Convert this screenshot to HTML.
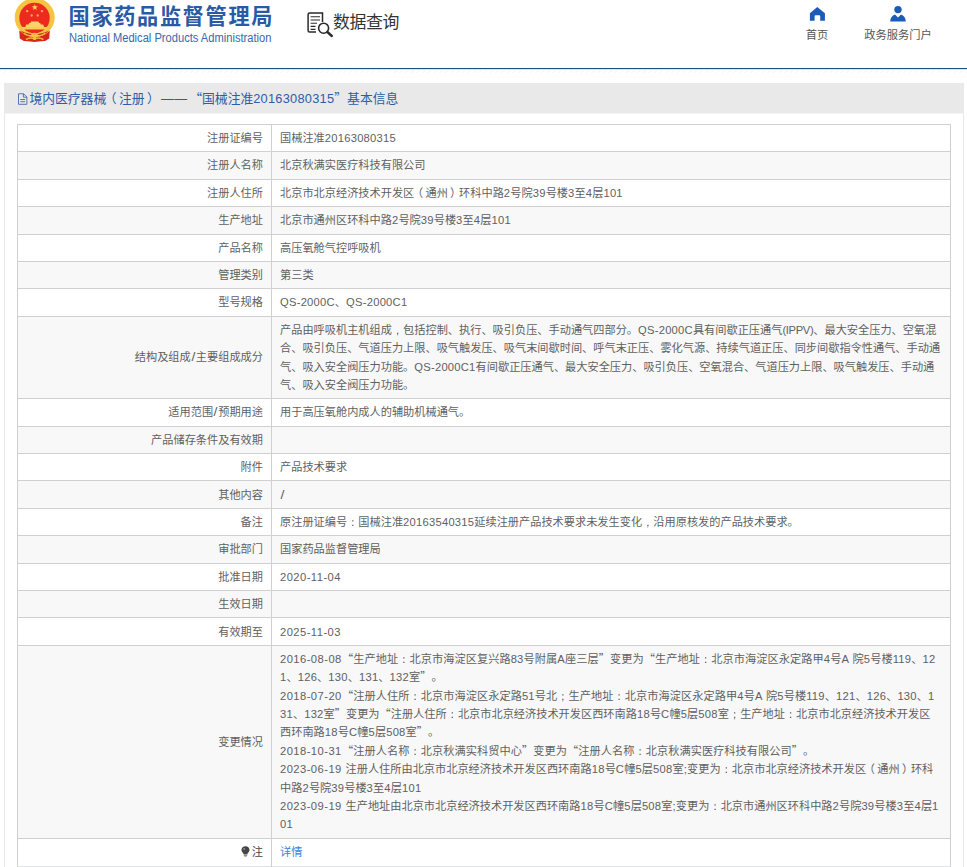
<!DOCTYPE html>
<html lang="zh-CN">
<head>
<meta charset="utf-8">
<title>国家药品监督管理局 数据查询</title>
<style>
*{box-sizing:border-box;margin:0;padding:0}
html,body{width:967px;height:867px;overflow:hidden;background:#fff}
body{position:relative;font-family:"Liberation Sans","Noto Sans CJK SC",sans-serif;font-size:11.2px;color:#5f5f5f;line-height:18.4px;text-spacing-trim:space-all}
.q{font-family:"Noto Sans CJK SC","Liberation Sans",sans-serif;line-height:0}
.c{font-family:"WenQuanYi Zen Hei","Noto Sans CJK SC",sans-serif;line-height:0}
.pl{position:relative;left:-.2em}
.pr{position:relative;left:.2em}
.e{letter-spacing:.25px}
.m{font-family:"Liberation Sans",sans-serif;letter-spacing:.4px;margin-left:3.6px;margin-right:1.9px}
.s{display:inline-block;transform:scale(1.25,1.12);margin:0 .9px}
.n{letter-spacing:-.35px}
.d{letter-spacing:.45px}
.k{margin-right:-3px}
.j{margin-right:.7px}
.abs{position:absolute}
.hd{position:absolute;left:0;top:0;width:967px;height:74px;background:#fff}
.t1{position:absolute;left:68.6px;top:1px;height:32px;line-height:32px;font-size:21.2px;font-weight:bold;color:#2a59a6;white-space:nowrap;font-family:"Liberation Sans","Noto Sans CJK SC",sans-serif;letter-spacing:1.65px}
.t2{position:absolute;left:68.6px;top:31.3px;height:14px;line-height:14px;font-size:12px;color:#3a66ad;white-space:nowrap;font-family:"Liberation Sans",sans-serif;transform:scaleX(.928);transform-origin:0 0}
.dq{position:absolute;left:333px;top:9.8px;height:25px;line-height:25px;font-size:16.9px;color:#333;white-space:nowrap;letter-spacing:-.35px}
.nv{position:absolute;top:26px;height:18px;line-height:18px;font-size:11.28px;color:#555;white-space:nowrap;text-align:center}
.hl{position:absolute;left:0;top:68px;width:967px;height:1px;background:#1c4f88}
.hl2{position:absolute;left:0;top:69px;width:967px;height:1px;background:#d3ecf7}
.pat{position:absolute;left:0;top:70px;width:967px;height:3px;background:repeating-linear-gradient(135deg,#fdf3f1 0 1.5px,#fff 1.5px 4px);opacity:.7}
.pn{position:absolute;left:4px;top:83px;width:960px;height:800px;border:1px solid #e8e8e8;border-top:0;background:#fff}
.pt{position:absolute;left:4px;top:83px;width:960px;height:31px;background:linear-gradient(#e9e9e9 0 30px,#f4f4f4 30px 31px)}
.ptt{position:absolute;left:29.4px;top:84.2px;height:30px;line-height:30px;font-size:12.8px;color:#2d5ca8;white-space:nowrap}
.tb{position:absolute;left:17px;top:124px;width:934px;height:760px;background:#fff}
.r{position:absolute;left:0;width:100%;border-top:1px solid #d0d0d0}
.r.g{background:#f8f8f8}
.vl{position:absolute;top:124px;width:1px;height:760px;background:#d0d0d0}
.lb{position:absolute;right:688px;white-space:nowrap;height:18.4px;line-height:18.4px;text-align:right}
.ln{position:absolute;left:263px;white-space:nowrap;height:18.4px;line-height:18.4px}
a.lk{color:#3c82dc;text-decoration:none}
.bulb{display:inline-block;position:relative;width:9px;height:11px;vertical-align:-1.5px;margin-right:2px}
.bulb svg{position:absolute;left:0;top:0}
</style>
</head>
<body>
<div class="hd">
<svg class="abs" style="left:0;top:0" width="70" height="48" viewBox="0 0 70 48">
<path d="M19.3 31 L24 29 L45 29 L49.8 31 L49.2 38.5 Q46 41.5 41 41.3 L34.6 42 L28 41.3 Q23 41.5 19.8 38.5 Z" fill="#d9261c"/>
<ellipse cx="34.7" cy="17.6" rx="20" ry="19.6" fill="#f6c443"/>
<circle cx="34.5" cy="18" r="15.2" fill="#ee2a1f"/>
<path d="M22 27 L47 27 Q47.6 28.6 46.2 29.6 L22.8 29.6 Q21.4 28.6 22 27Z" fill="#f7cf4e"/>
<path d="M25.4 27 L26.2 24.6 L28.6 24.6 L29.2 23 L30.4 23 L31 21.5 L38.4 21.5 L39 23 L40.2 23 L40.8 24.6 L43.2 24.6 L44 27Z" fill="#f8d46a"/>
<path d="M20.5 30.5 Q34.6 38 48.9 30.5 Q42 37.5 37.5 34.8 Q34.6 32 31.7 34.8 Q27 37.5 20.5 30.5Z" fill="#c9251b"/>
<path d="M24 33.2 Q30 37.2 32.5 34.4 Q34.6 32.6 36.7 34.4 Q39.2 37.2 45.2 33.2" fill="none" stroke="#f6c443" stroke-width="1.3"/>
<path d="M26 39.5 Q30 37 34.6 38.6 Q39 37 43.4 39.5" fill="none" stroke="#f3b544" stroke-width="1.5"/>
<circle cx="34.6" cy="38.4" r="1.7" fill="#f6c443"/>
<path d="M34.8 4.2 L35.6 6.3 L37.9 6.4 L36.1 7.8 L36.7 10 L34.8 8.7 L32.9 10 L33.5 7.8 L31.7 6.4 L34 6.3Z" fill="#f9d25a"/>
<circle cx="27.2" cy="11.2" r="1.15" fill="#f7b35a"/>
<circle cx="42" cy="11.2" r="1.15" fill="#f7b35a"/>
<circle cx="31.7" cy="15.5" r="1.15" fill="#f7b35a"/>
<circle cx="37.7" cy="15.5" r="1.15" fill="#f7b35a"/>
</svg>
<div class="t1">国家药品监督管理局</div>
<div class="t2">National Medical Products Administration</div>
<svg class="abs" style="left:300px;top:6px" width="40" height="36" viewBox="300 6 40 36">
<path d="M322.5 13.1 H309.6 Q308.1 13.1 308.1 14.6 V30.4 Q308.1 31.9 309.6 31.9 H316" fill="none" stroke="#2b2b2b" stroke-width="1.5"/>
<path d="M322.5 12.4 V22" fill="none" stroke="#2b2b2b" stroke-width="1.5"/>
<path d="M310.6 16.8 H320 M310.6 20 H320 M310.6 23.2 H317 M310.6 26.4 H315.5 M310.6 29.4 H315.5" fill="none" stroke="#2b2b2b" stroke-width="1.1"/>
<circle cx="323.6" cy="28.2" r="5" fill="#fff" stroke="#2b2b2b" stroke-width="1.6"/>
<path d="M327.4 32 L331.8 36" fill="none" stroke="#2b2b2b" stroke-width="2.4" stroke-linecap="round"/>
</svg>
<svg class="abs" style="left:800px;top:2px" width="120" height="24" viewBox="800 2 120 24">
<path d="M817.3 7 L824.9 13.2 V20.8 H820.2 V16.2 Q820.2 15.2 819.2 15.2 H815.6 Q814.6 15.2 814.6 16.2 V20.8 H809.9 V13.2 Z" fill="#1a5cb8"/>
<circle cx="898" cy="9.6" r="3.7" fill="#1a5cb8"/>
<path d="M890.2 21.4 Q890.6 16 895 14.6 L898 17.4 L901 14.6 Q905.4 16 905.8 21.4 Z" fill="#1a5cb8"/>
</svg>
<div class="dq">数据查询</div>
<div class="nv" style="left:797px;width:40px">首页</div>
<div class="nv" style="left:858px;width:80px">政务服务门户</div>
</div>
<div class="hl"></div><div class="hl2"></div><div class="pat"></div>
<div class="pn"></div>
<div class="pt"></div>
<svg class="abs" style="left:16px;top:90px" width="14" height="17" viewBox="16 90 14 17">
<path d="M18.5 93.8 H23.6 L26.9 97 V104.3 H18.5 Z" fill="none" stroke="#4169b0" stroke-width=".9"/>
<path d="M23.4 93.9 V97.2 H26.8" fill="none" stroke="#4169b0" stroke-width=".9"/>
<path d="M20.3 99.5 H25.1 M20.3 101.7 H25.1" fill="none" stroke="#4169b0" stroke-width=".9"/>
</svg>
<div class="ptt">境内医疗器械<span class="pl">（</span>注册<span class="pr">）</span><span class="m">——</span><span class="q">“</span>国械注准<span class="e">20163080315</span><span class="q">”</span>基本信息</div>
<div class="tb">
<div class="r" style="top:0px;height:27px"><div class="lb" style="top:4.00px">注册证编号</div><div class="ln" style="top:4.00px">国械注准<span class="e">20163080315</span></div></div>
<div class="r g" style="top:27px;height:28px"><div class="lb" style="top:4.40px">注册人名称</div><div class="ln" style="top:4.40px">北京秋满实医疗科技有限公司</div></div>
<div class="r" style="top:55px;height:27px"><div class="lb" style="top:3.80px">注册人住所</div><div class="ln" style="top:3.80px">北京市北京经济技术开发区<span class="pl">（</span>通州<span class="pr">）</span>环科中路<span class="e">2</span>号院<span class="e">39</span>号楼<span class="e">3</span>至<span class="e">4</span>层<span class="e">101</span></div></div>
<div class="r g" style="top:82px;height:28px"><div class="lb" style="top:4.20px">生产地址</div><div class="ln" style="top:4.20px">北京市通州区环科中路<span class="e">2</span>号院<span class="e">39</span>号楼<span class="e">3</span>至<span class="e">4</span>层<span class="e">101</span></div></div>
<div class="r" style="top:110px;height:27px"><div class="lb" style="top:3.60px">产品名称</div><div class="ln" style="top:3.60px">高压氧舱气控呼吸机</div></div>
<div class="r g" style="top:137px;height:27px"><div class="lb" style="top:4.00px">管理类别</div><div class="ln" style="top:4.00px">第三类</div></div>
<div class="r" style="top:164px;height:28px"><div class="lb" style="top:4.40px">型号规格</div><div class="ln" style="top:4.40px"><span class="e">QS-2000C</span>、<span class="e">QS-2000C1</span></div></div>
<div class="r g" style="top:192px;height:82px"><div class="lb" style="top:31.35px">结构及组成<span class="e s">/</span>主要组成成分</div><div class="ln" style="top:3.75px">产品由呼吸机主机组成<span class="c">，</span>包括控制、执行、吸引负压、手动通气四部分。<span class="e">QS-2000C</span>具有间歇正压通气<span class="e n">(IPPV)</span>、最大安全压力、空氧混</div><div class="ln" style="top:22.15px">合、吸引负压、气道压力上限、吸气触发压、吸气末间歇时间、呼气末正压、雾化气源、持续气道正压、同步间歇指令性通气、手动通</div><div class="ln" style="top:40.55px">气、吸入安全阀压力功能。<span class="e">QS-2000C1</span>有间歇正压通气、最大安全压力、吸引负压、空氧混合、气道压力上限、吸气触发压、手动通</div><div class="ln" style="top:58.95px">气、吸入安全阀压力功能。</div></div>
<div class="r" style="top:274px;height:28px"><div class="lb" style="top:4.30px">适用范围<span class="e s">/</span>预期用途</div><div class="ln" style="top:4.30px">用于高压氧舱内成人的辅助机械通气。</div></div>
<div class="r g" style="top:302px;height:27px"><div class="lb" style="top:3.70px">产品储存条件及有效期</div></div>
<div class="r" style="top:329px;height:27px"><div class="lb" style="top:4.10px">附件</div><div class="ln" style="top:4.10px">产品技术要求</div></div>
<div class="r g" style="top:356px;height:28px"><div class="lb" style="top:4.50px">其他内容</div><div class="ln" style="top:4.50px"><span class="e s">/</span></div></div>
<div class="r" style="top:384px;height:27px"><div class="lb" style="top:3.90px">备注</div><div class="ln" style="top:3.90px">原注册证编号<span class="c">：</span>国械注准<span class="e">20163540315</span>延续注册产品技术要求未发生变化<span class="c">，</span>沿用原核发的产品技术要求。</div></div>
<div class="r g" style="top:411px;height:28px"><div class="lb" style="top:4.30px">审批部门</div><div class="ln" style="top:4.30px">国家药品监督管理局</div></div>
<div class="r" style="top:439px;height:27px"><div class="lb" style="top:3.70px">批准日期</div><div class="ln" style="top:3.70px"><span class="e d">2020-11-04</span></div></div>
<div class="r g" style="top:466px;height:27px"><div class="lb" style="top:4.10px">生效日期</div></div>
<div class="r" style="top:493px;height:28px"><div class="lb" style="top:4.50px">有效期至</div><div class="ln" style="top:4.50px"><span class="e d">2025-11-03</span></div></div>
<div class="r g" style="top:521px;height:193px"><div class="lb" style="top:86.65px">变更情况</div><div class="ln" style="top:3.85px;letter-spacing:.06px"><span class="e d k">2016-08-08</span> <span class="q">“</span>生产地址<span class="c">：</span>北京市海淀区复兴路<span class="e">83</span>号附属<span class="e">A</span>座三层<span class="q">”</span>变更为<span class="q">“</span>生产地址<span class="c">：</span>北京市海淀区永定路甲<span class="e">4</span>号<span class="e">A</span> 院<span class="e">5</span>号楼<span class="e">119</span>、<span class="e">12</span></div><div class="ln" style="top:22.25px"><span class="e">1</span>、<span class="e">126</span>、<span class="e">130</span>、<span class="e">131</span>、<span class="e">132</span>室<span class="q">”</span>。</div><div class="ln" style="top:40.65px;letter-spacing:.06px"><span class="e d k">2018-07-20</span> <span class="q">“</span>注册人住所<span class="c">：</span>北京市海淀区永定路<span class="e">51</span>号北<span class="c">；</span>生产地址<span class="c">：</span>北京市海淀区永定路甲<span class="e">4</span>号<span class="e">A</span> 院<span class="e">5</span>号楼<span class="e">119</span>、<span class="e">121</span>、<span class="e">126</span>、<span class="e">130</span>、<span class="e">1</span></div><div class="ln" style="top:59.05px"><span class="e">31</span>、<span class="e">132</span>室<span class="q">”</span>变更为<span class="q">“</span>注册人住所<span class="c">：</span>北京市北京经济技术开发区西环南路<span class="e">18</span>号<span class="e">C</span>幢<span class="e">5</span>层<span class="e">508</span>室<span class="c">；</span>生产地址<span class="c">：</span>北京市北京经济技术开发区</div><div class="ln" style="top:77.45px">西环南路<span class="e">18</span>号<span class="e">C</span>幢<span class="e">5</span>层<span class="e">508</span>室<span class="q">”</span>。</div><div class="ln" style="top:95.85px;letter-spacing:.06px"><span class="e d k">2018-10-31</span> <span class="q">“</span>注册人名称<span class="c">：</span>北京秋满实科贸中心<span class="q">”</span>变更为<span class="q">“</span>注册人名称<span class="c">：</span>北京秋满实医疗科技有限公司<span class="q">”</span>。</div><div class="ln" style="top:114.25px"><span class="e d j">2023-06-19</span> 注册人住所由北京市北京经济技术开发区西环南路<span class="e">18</span>号<span class="e">C</span>幢<span class="e">5</span>层<span class="e">508</span>室<span class="e">;</span>变更为<span class="c">：</span>北京市北京经济技术开发区<span class="pl">（</span>通州<span class="pr">）</span>环科</div><div class="ln" style="top:132.65px">中路<span class="e">2</span>号院<span class="e">39</span>号楼<span class="e">3</span>至<span class="e">4</span>层<span class="e">101</span></div><div class="ln" style="top:151.05px"><span class="e d j">2023-09-19</span> 生产地址由北京市北京经济技术开发区西环南路<span class="e">18</span>号<span class="e">C</span>幢<span class="e">5</span>层<span class="e">508</span>室<span class="e">;</span>变更为<span class="c">：</span>北京市通州区环科中路<span class="e">2</span>号院<span class="e">39</span>号楼<span class="e">3</span>至<span class="e">4</span>层<span class="e">1</span></div><div class="ln" style="top:169.45px"><span class="e">01</span></div></div>
<div class="r" style="top:714px;height:28px"><div class="lb" style="top:3.80px"><span class="bulb"><svg width="9" height="11" viewBox="0 0 9 11"><path d="M4.5 0.3 C6.9 0.3 8.5 2 8.5 4 C8.5 5.6 7.3 6.6 6.6 7.6 L6.4 8.6 H2.6 L2.4 7.6 C1.7 6.6 0.5 5.6 0.5 4 C0.5 2 2.1 0.3 4.5 0.3Z" fill="#454545"/><path d="M2.8 9.2 H6.2 V10 Q4.5 11 2.8 10Z" fill="#666"/><circle cx="3.2" cy="3" r="1.1" fill="#8a8a8a"/></svg></span><span style="color:#444">注</span></div><div class="ln" style="top:3.80px"><a class="lk">详情</a></div></div>
<div class="r" style="top:742px;height:1px;border-top-color:#e2e3e8"></div>
</div>
<div class="vl" style="left:17px"></div><div class="vl" style="left:271px"></div><div class="vl" style="left:950px"></div>
</body>
</html>
